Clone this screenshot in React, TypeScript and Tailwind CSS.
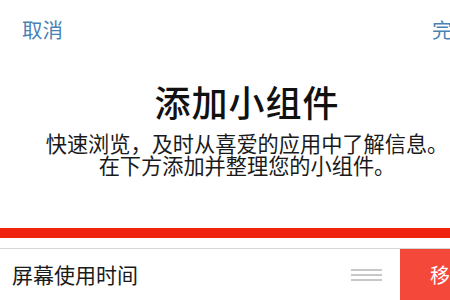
export default function App() {
  const cjk = { fontFamily: '"Noto Sans CJK SC", "Noto Sans", sans-serif' }

  return (
    <div className="w-[450px] h-[300px] overflow-hidden bg-white flex flex-col" style={cjk}>
      {/* Top nav */}
      <div className="flex items-center h-[28px] mt-[15px] pl-[22px]">
        <span className="text-[20.5px] leading-[28px] text-[#4a82b6]">取消</span>
        <span className="ml-auto mr-[-23px] text-[20.5px] leading-[28px] text-[#4a82b6] whitespace-nowrap">完成</span>
      </div>

      {/* Heading */}
      <div className="flex flex-col items-center mt-[36px] pl-[44px]">
        <h1 className="text-[36px] leading-[44px] font-medium text-[#111] tracking-[1px]">添加小组件</h1>
        <p className="mt-[9px] text-[21.2px] leading-[22px] text-[#1a1a1a] whitespace-nowrap text-center">
          快速浏览，及时从喜爱的应用中了解信息。
          <br />
          在下方添加并整理您的小组件。
        </p>
      </div>

      {/* Red highlight bar */}
      <div className="mt-[52px] h-[10px] bg-[#f0240e]" />

      <div className="mt-[10px] h-px bg-[#d6d6d6]" />

      {/* Widget row */}
      <div className="flex items-center flex-1">
        <span className="pl-[12px] text-[21px] text-[#1a1a1a]">屏幕使用时间</span>
        <div className="ml-auto mr-[18px] flex flex-col gap-[3px] w-[31px]">
          <div className="h-[2px] bg-[#c8c8c8]" />
          <div className="h-[2px] bg-[#c8c8c8]" />
          <div className="h-[2px] bg-[#c8c8c8]" />
        </div>
        <div className="h-full w-[50px] bg-[#f4483a] flex items-center pl-[30px] overflow-hidden">
          <span className="text-[20px] text-white whitespace-nowrap">移除</span>
        </div>
      </div>
    </div>
  )
}
